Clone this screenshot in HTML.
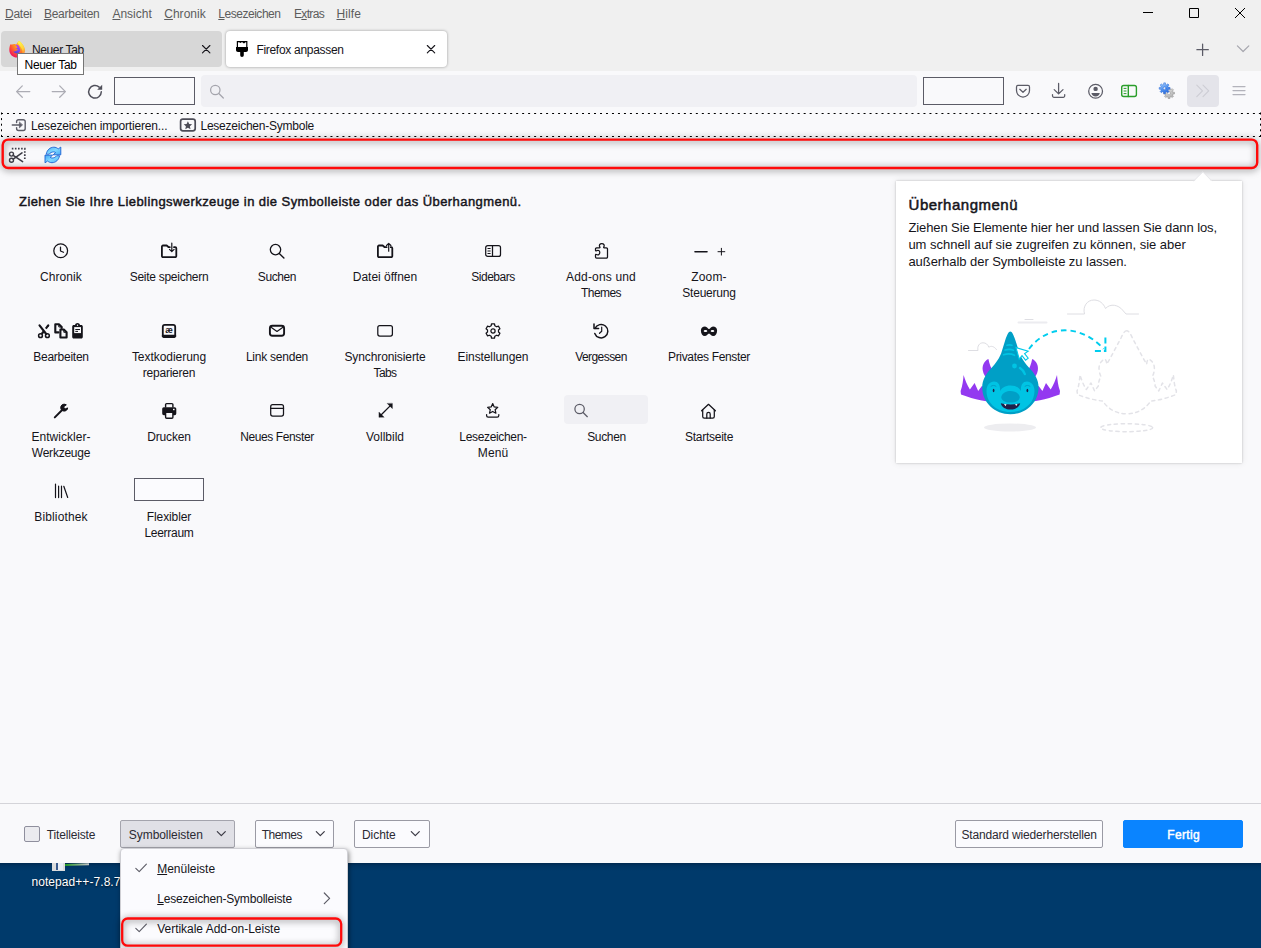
<!DOCTYPE html>
<html lang="de">
<head>
<meta charset="utf-8">
<title>Firefox anpassen</title>
<style>
*{box-sizing:border-box;margin:0;padding:0}
html,body{width:1261px;height:948px;overflow:hidden}
body{position:relative;background:#f9f9fb;font-family:"Liberation Sans","DejaVu Sans",sans-serif;font-size:12px;color:#15141a}
.abs{position:absolute}
.t{position:absolute;white-space:nowrap}
.t u{text-decoration:underline;text-underline-offset:1px;text-decoration-thickness:1px}
svg{position:absolute;overflow:visible}
#titlebar{left:0;top:0;width:1261px;height:71px;background:#f0f0f0}
#tab1{left:1px;top:31px;width:221px;height:36px;background:#d7d7d7;border-radius:4px}
#tab2{left:226px;top:31px;width:221px;height:36px;background:#fff;border-radius:4px;box-shadow:0 0 3px rgba(0,0,0,.38)}
#navbar{left:0;top:71px;width:1261px;height:41px;background:#f9f9fb}
.box{border:1px solid #5b5b66;background:#f9f9fb}
#urlbar{left:201px;top:75px;width:716px;height:32px;background:#f0f0f4;border-radius:4px}
#addonbar{left:2px;top:139px;width:1256px;height:30px;border-radius:6px;background:#f9f9fb}
#panel{left:896px;top:181px;width:346px;height:282px;background:#fff;box-shadow:0 0 2px rgba(0,0,0,.22),0 0 7px rgba(0,0,0,.09)}
#footer{left:0;top:803px;width:1261px;height:60px;background:#f9f9fb;border-top:1px solid #d4d4d9}
#desktop{left:0;top:862px;width:1261px;height:86px;background:linear-gradient(#00264a,#003462 4px,#003a6b 9px)}
.btn{position:absolute;top:820px;height:28px;border:1px solid #9a9aa4;border-radius:2px;background:#fbfbfe}
#popup{left:120px;top:848px;width:228px;height:110px;background:#fbfbfe;border:1px solid #cfcfd4;border-radius:4px;box-shadow:1px 2px 5px rgba(0,0,0,.45)}
#tooltip{left:17px;top:53px;width:67px;height:22px;background:#fff;border:1px solid #767676}
</style>
</head>
<body>
<div id="titlebar" class="abs"></div>
<div id="tab1" class="abs"></div>
<div id="tab2" class="abs"></div>
<div id="navbar" class="abs"></div>
<div class="abs box" style="left:114px;top:77px;width:81px;height:28px"></div>
<div id="urlbar" class="abs"></div>
<div class="abs box" style="left:923px;top:77px;width:81px;height:28px"></div>
<div class="abs" style="left:1187px;top:75px;width:32px;height:32px;background:#e4e4ea;border-radius:4px"></div>
<div id="addonbar" class="abs"></div>
<div class="abs" style="left:564px;top:395px;width:84px;height:29px;background:#f0f0f4;border-radius:4px"></div>
<div class="abs box" style="left:134px;top:478px;width:70px;height:23px;background:#fbfbfe"></div>
<div id="panel" class="abs"></div>
<div id="desktop" class="abs"></div>
<div class="abs" style="left:52px;top:862px;width:13px;height:9px;background:#dcdcdc"></div>
<div class="abs" style="left:56px;top:863px;width:7px;height:7px;background:#e9eef5;border-left:2px solid #3a5a8c"></div>
<div class="abs" style="left:65px;top:864px;width:24px;height:2px;background:linear-gradient(90deg,#1f9a1f,#9ab59a 70%,#c8c8c8);transform:rotate(-1.5deg);transform-origin:left"></div>
<div class="t" style="left:31.4px;top:874px;font-size:12px;line-height:16px;color:#fff;width:89px;letter-spacing:.07px;overflow:hidden;text-shadow:0 1px 2px rgba(0,0,0,.8)">notepad++-7.8.7</div>
<div id="footer" class="abs"></div>
<div class="abs" style="left:24px;top:826px;width:16px;height:16px;border:1px solid #8f8f9d;border-radius:2px;background:#ebebef"></div>
<div class="btn" style="left:120px;width:115px;background:#e0e0e6;border-color:#a4a4ad"></div>
<div class="btn" style="left:255px;width:79px"></div>
<div class="btn" style="left:354px;width:76px"></div>
<div class="btn" style="left:955px;width:148px"></div>
<div class="btn" style="left:1123px;width:120px;background:#0a84ff;border-color:#0a84ff"></div>
<div id="popup" class="abs"></div>
<div class="t" style="top:6.14px;font-size:12px;line-height:16px;color:#5c5c5c;letter-spacing:-0.266px;left:5.0px;"><u>D</u>atei</div>
<div class="t" style="top:6.14px;font-size:12px;line-height:16px;color:#5c5c5c;letter-spacing:-0.246px;left:43.9px;"><u>B</u>earbeiten</div>
<div class="t" style="top:6.14px;font-size:12px;line-height:16px;color:#5c5c5c;letter-spacing:0.004px;left:112.4px;"><u>A</u>nsicht</div>
<div class="t" style="top:6.14px;font-size:12px;line-height:16px;color:#5c5c5c;letter-spacing:0.034px;left:164.2px;"><u>C</u>hronik</div>
<div class="t" style="top:6.14px;font-size:12px;line-height:16px;color:#5c5c5c;letter-spacing:-0.473px;left:218.3px;"><u>L</u>esezeichen</div>
<div class="t" style="top:6.14px;font-size:12px;line-height:16px;color:#5c5c5c;letter-spacing:-0.672px;left:294.0px;">E<u>x</u>tras</div>
<div class="t" style="top:6.14px;font-size:12px;line-height:16px;color:#5c5c5c;letter-spacing:0.097px;left:336.5px;"><u>H</u>ilfe</div>
<div class="t" style="top:41.64px;font-size:12px;line-height:16px;color:#15141a;letter-spacing:-0.362px;left:31.9px;">Neuer Tab</div>
<div class="t" style="top:41.64px;font-size:12px;line-height:16px;color:#15141a;letter-spacing:-0.298px;left:256.4px;">Firefox anpassen</div>
<div class="t" style="top:117.54px;font-size:12px;line-height:16px;color:#15141a;letter-spacing:-0.175px;left:31.1px;">Lesezeichen importieren...</div>
<div class="t" style="top:117.54px;font-size:12px;line-height:16px;color:#15141a;letter-spacing:-0.241px;left:200.5px;">Lesezeichen-Symbole</div>
<div class="t" style="top:193.30px;font-size:13px;line-height:18px;color:#15141a;letter-spacing:0.436px;left:19.0px;-webkit-text-stroke:.45px #15141a;">Ziehen Sie Ihre Lieblingswerkzeuge in die Symbolleiste oder das Überhangmenü.</div>
<div class="t" style="top:268.84px;font-size:12px;line-height:16px;color:#15141a;letter-spacing:0.063px;left:-39.0px;width:200px;text-align:center;">Chronik</div>
<div class="t" style="top:268.84px;font-size:12px;line-height:16px;color:#15141a;letter-spacing:-0.268px;left:69.0px;width:200px;text-align:center;">Seite speichern</div>
<div class="t" style="top:268.84px;font-size:12px;line-height:16px;color:#15141a;letter-spacing:-0.401px;left:177.0px;width:200px;text-align:center;">Suchen</div>
<div class="t" style="top:268.84px;font-size:12px;line-height:16px;color:#15141a;letter-spacing:-0.008px;left:285.0px;width:200px;text-align:center;">Datei öffnen</div>
<div class="t" style="top:268.84px;font-size:12px;line-height:16px;color:#15141a;letter-spacing:-0.497px;left:393.0px;width:200px;text-align:center;">Sidebars</div>
<div class="t" style="top:268.84px;font-size:12px;line-height:16px;color:#15141a;letter-spacing:0.158px;left:501.0px;width:200px;text-align:center;">Add-ons und</div>
<div class="t" style="top:284.84px;font-size:12px;line-height:16px;color:#15141a;letter-spacing:-0.560px;left:501.0px;width:200px;text-align:center;">Themes</div>
<div class="t" style="top:268.84px;font-size:12px;line-height:16px;color:#15141a;letter-spacing:0.166px;left:609.0px;width:200px;text-align:center;">Zoom-</div>
<div class="t" style="top:284.84px;font-size:12px;line-height:16px;color:#15141a;letter-spacing:-0.232px;left:609.0px;width:200px;text-align:center;">Steuerung</div>
<div class="t" style="top:348.84px;font-size:12px;line-height:16px;color:#15141a;letter-spacing:-0.255px;left:-39.0px;width:200px;text-align:center;">Bearbeiten</div>
<div class="t" style="top:348.84px;font-size:12px;line-height:16px;color:#15141a;letter-spacing:-0.040px;left:69.0px;width:200px;text-align:center;">Textkodierung</div>
<div class="t" style="top:364.84px;font-size:12px;line-height:16px;color:#15141a;letter-spacing:-0.240px;left:69.0px;width:200px;text-align:center;">reparieren</div>
<div class="t" style="top:348.84px;font-size:12px;line-height:16px;color:#15141a;letter-spacing:-0.238px;left:177.0px;width:200px;text-align:center;">Link senden</div>
<div class="t" style="top:348.84px;font-size:12px;line-height:16px;color:#15141a;letter-spacing:-0.101px;left:285.0px;width:200px;text-align:center;">Synchronisierte</div>
<div class="t" style="top:364.84px;font-size:12px;line-height:16px;color:#15141a;letter-spacing:-0.590px;left:285.0px;width:200px;text-align:center;">Tabs</div>
<div class="t" style="top:348.84px;font-size:12px;line-height:16px;color:#15141a;letter-spacing:-0.097px;left:393.0px;width:200px;text-align:center;">Einstellungen</div>
<div class="t" style="top:348.84px;font-size:12px;line-height:16px;color:#15141a;letter-spacing:-0.558px;left:501.0px;width:200px;text-align:center;">Vergessen</div>
<div class="t" style="top:348.84px;font-size:12px;line-height:16px;color:#15141a;letter-spacing:-0.342px;left:609.0px;width:200px;text-align:center;">Privates Fenster</div>
<div class="t" style="top:428.84px;font-size:12px;line-height:16px;color:#15141a;letter-spacing:0.028px;left:-39.0px;width:200px;text-align:center;">Entwickler-</div>
<div class="t" style="top:444.84px;font-size:12px;line-height:16px;color:#15141a;letter-spacing:-0.232px;left:-39.0px;width:200px;text-align:center;">Werkzeuge</div>
<div class="t" style="top:428.84px;font-size:12px;line-height:16px;color:#15141a;letter-spacing:-0.170px;left:69.0px;width:200px;text-align:center;">Drucken</div>
<div class="t" style="top:428.84px;font-size:12px;line-height:16px;color:#15141a;letter-spacing:-0.393px;left:177.0px;width:200px;text-align:center;">Neues Fenster</div>
<div class="t" style="top:428.84px;font-size:12px;line-height:16px;color:#15141a;letter-spacing:0.009px;left:285.0px;width:200px;text-align:center;">Vollbild</div>
<div class="t" style="top:428.84px;font-size:12px;line-height:16px;color:#15141a;letter-spacing:-0.341px;left:393.0px;width:200px;text-align:center;">Lesezeichen-</div>
<div class="t" style="top:444.84px;font-size:12px;line-height:16px;color:#15141a;letter-spacing:0.092px;left:393.0px;width:200px;text-align:center;">Menü</div>
<div class="t" style="top:428.84px;font-size:12px;line-height:16px;color:#15141a;letter-spacing:-0.334px;left:506.5px;width:200px;text-align:center;">Suchen</div>
<div class="t" style="top:428.84px;font-size:12px;line-height:16px;color:#15141a;letter-spacing:-0.250px;left:609.0px;width:200px;text-align:center;">Startseite</div>
<div class="t" style="top:508.84px;font-size:12px;line-height:16px;color:#15141a;letter-spacing:0.127px;left:-39.0px;width:200px;text-align:center;">Bibliothek</div>
<div class="t" style="top:508.84px;font-size:12px;line-height:16px;color:#15141a;letter-spacing:-0.107px;left:69.0px;width:200px;text-align:center;">Flexibler</div>
<div class="t" style="top:524.84px;font-size:12px;line-height:16px;color:#15141a;letter-spacing:-0.270px;left:69.0px;width:200px;text-align:center;">Leerraum</div>
<div class="t" style="top:194.50px;font-size:15px;line-height:20px;color:#15141a;letter-spacing:0.499px;left:908.6px;-webkit-text-stroke:.5px #15141a;">Überhangmenü</div>
<div class="t" style="top:218.50px;font-size:13px;line-height:18px;color:#15141a;letter-spacing:-0.095px;left:908.4px;">Ziehen Sie Elemente hier her und lassen Sie dann los,</div>
<div class="t" style="top:235.50px;font-size:13px;line-height:18px;color:#15141a;letter-spacing:-0.017px;left:908.4px;">um schnell auf sie zugreifen zu können, sie aber</div>
<div class="t" style="top:252.50px;font-size:13px;line-height:18px;color:#15141a;letter-spacing:-0.051px;left:908.4px;">außerhalb der Symbolleiste zu lassen.</div>
<div class="t" style="top:827.14px;font-size:12px;line-height:16px;color:#2b2a33;letter-spacing:-0.168px;left:46.8px;">Titelleiste</div>
<div class="t" style="top:827.14px;font-size:12px;line-height:16px;color:#2b2a33;letter-spacing:-0.054px;left:128.8px;">Symbolleisten</div>
<div class="t" style="top:827.14px;font-size:12px;line-height:16px;color:#2b2a33;letter-spacing:-0.510px;left:261.7px;">Themes</div>
<div class="t" style="top:827.14px;font-size:12px;line-height:16px;color:#2b2a33;letter-spacing:-0.053px;left:362.0px;">Dichte</div>
<div class="t" style="top:827.14px;font-size:12px;line-height:16px;color:#2b2a33;letter-spacing:-0.157px;left:961.4px;">Standard wiederherstellen</div>
<div class="t" style="top:827.14px;font-size:12px;line-height:16px;color:#fff;letter-spacing:0.385px;left:1167.2px;-webkit-text-stroke:.45px #fff;">Fertig</div>
<div class="t" style="top:860.84px;font-size:12px;line-height:16px;color:#15141a;letter-spacing:-0.015px;left:157.2px;"><u>M</u>enüleiste</div>
<div class="t" style="top:890.64px;font-size:12px;line-height:16px;color:#15141a;letter-spacing:-0.193px;left:157.2px;"><u>L</u>esezeichen-Symbolleiste</div>
<div class="t" style="top:920.74px;font-size:12px;line-height:16px;color:#15141a;letter-spacing:-0.023px;left:157.2px;">Vertikale Add-on-Leiste</div>
<!-- TOP CHROME ICONS -->
<svg width="1261" height="172" viewBox="0 0 1261 172" style="left:0;top:0" fill="none" stroke-linecap="round" stroke-linejoin="round">
<defs>
<radialGradient id="fxg" cx="0.75" cy="0.1" r="1.050"><stop offset="0" stop-color="#ffd43a"/><stop offset="0.400" stop-color="#ff9a1f"/><stop offset="0.700" stop-color="#ff4a3a"/><stop offset="1" stop-color="#e60068"/></radialGradient>
<linearGradient id="fxy" x1="0.3" y1="0" x2="0.6" y2="1"><stop offset="0" stop-color="#fff84a"/><stop offset="0.600" stop-color="#ffd23a"/><stop offset="1" stop-color="#ff8a2a"/></linearGradient>
<linearGradient id="fxp" x1="0.6" y1="0" x2="0.3" y2="1"><stop offset="0" stop-color="#c23bf5"/><stop offset="0.600" stop-color="#7a4af0"/><stop offset="1" stop-color="#4a3fd0"/></linearGradient>
<linearGradient id="syg" x1="0" y1="0" x2="1" y2="1"><stop offset="0" stop-color="#4fb0f6"/><stop offset="0.500" stop-color="#7fd8ff"/><stop offset="1" stop-color="#48a8f4"/></linearGradient>
<linearGradient id="gbl" x1="0.2" y1="0" x2="0.7" y2="1"><stop offset="0" stop-color="#a8d0fc"/><stop offset="0.5" stop-color="#5596f0"/><stop offset="1" stop-color="#2466dc"/></linearGradient>
<linearGradient id="ggr" x1="0" y1="0" x2="0.5" y2="1"><stop offset="0" stop-color="#e6e6e6"/><stop offset="1" stop-color="#b4b4b4"/></linearGradient>
</defs>
<!-- window controls -->
<g stroke="#000" stroke-width="1" stroke-linecap="butt">
<path d="M1143 12.5h10"/>
<rect x="1189.5" y="8.5" width="9" height="9"/>
<path d="M1235 8l10 10M1245 8l-10 10"/>
</g>
<!-- new tab + / chevron -->
<path d="M1202.6 44v11.4M1196.9 49.7h11.4" stroke="#5b5b66" stroke-width="1.25"/>
<path d="M1237.4 45.8l5.7 5.7 5.7-5.7" stroke="#a6a6ae" stroke-width="1.2"/>
<!-- firefox logo -->
<g transform="translate(9 41)" stroke="none">
<path d="M1.400 3.200c.5.300 1 .400 1.600.300.800-.500 1.800-.700 2.900-.600L7.200 3.500C8 2 9 .8 10.100-.200c1.400 1.400 3.400 3 4.500 5.200 1 2 1.500 4.300.800 6.600-1 3-3.900 4.900-7.300 4.900-4.300 0-7.800-3.400-7.800-7.600 0-2.200.400-4 1.100-5.700z" fill="url(#fxg)"/>
<path d="M10.100-.200c1.400 1.400 3.400 3 4.500 5.200 1 2 1.400 4.200.900 6.200-.600 1.500-1.600 2.500-3 3.200 1.300-2.200 1.300-5-.200-7.500C11.200 5 9.300 3.400 8.600 1.600 9 1 9.500.400 10.100-.200z" fill="url(#fxy)"/>
<path d="M6.300 4c1.600-.500 3.300.100 4 1.500.500 1 .400 1.900.900 2.600.600 2.200-.900 3.900-2.700 4.300-1.800.300-3.700-.600-4.300-2.100.800.300 2.200.200 2.700-.300C8 9.600 8.700 9.100 9 8.300 8 8.500 7 8.200 6.500 7.600c.900-.100 1.700-.600 2-1.100-.600-1.300-1.300-1.900-2.200-2.500z" fill="url(#fxp)"/>
</g>
<!-- tab close x -->
<path d="M202.500 45.500l7.400 7.400M209.900 45.500l-7.400 7.400" stroke="#15141a" stroke-width="1.100"/>
<path d="M427.300 45.500l7.400 7.400M434.700 45.500l-7.400 7.400" stroke="#15141a" stroke-width="1.100"/>
<!-- paintbrush -->
<g fill="#000" stroke="none">
<path d="M236.800 41h10.600v6.200h-10.600z M238 42.800v4.100h8.200v-4.600c-.5-.3-1-.2-1.300.4-.4.800-1.500.8-2 0-.5-.7-1.100-.6-1.700-.1-.7.500-1.300.4-1.700-.2-.4-.5-1-.4-1.500.4z" fill-rule="evenodd"/>
<path d="M236 47h12v3c0 1.100-.9 2-2 2h-8c-1.100 0-2-.9-2-2z"/>
<path d="M240.200 51.500h3.600v3.800a1.800 1.800 0 0 1-3.600 0z"/>
</g>
<!-- back / forward (disabled) -->
<g stroke="#acacb4" stroke-width="1.250">
<path d="M29.800 91.600H16.600M22.300 85.900l-5.700 5.700 5.700 5.700"/>
<path d="M52.200 91.600h13.200M59.700 85.900l5.700 5.700-5.700 5.700"/>
</g>
<!-- reload -->
<g>
<path d="M101.300 91.800a6.300 6.300 0 1 1-2.100-4.700" stroke="#4f4f5a" stroke-width="1.500"/>
<path d="M102.200 84.800v5h-5z" fill="#4f4f5a" stroke="none"/>
</g>
<!-- urlbar search glass -->
<g stroke="#a4a4ac" stroke-width="1.250"><circle cx="215.300" cy="90" r="4.700"/><path d="M218.800 93.500l4.500 4.500"/></g>
<!-- pocket -->
<g stroke="#5b5b66" stroke-width="1.250">
<path d="M1018 85.400h10a1.500 1.500 0 0 1 1.500 1.500v3.600a6.500 6.500 0 0 1-13 0v-3.600a1.500 1.500 0 0 1 1.500-1.500z"/>
<path d="M1019.800 89.300l3.200 3 3.200-3"/>
</g>
<!-- download -->
<g stroke="#5b5b66" stroke-width="1.250">
<path d="M1058.600 83.400v10.300M1054.200 89.600l4.400 4.300 4.400-4.300"/>
<path d="M1052.500 94.600v1.200a1.500 1.500 0 0 0 1.500 1.500h9.200a1.500 1.500 0 0 0 1.500-1.500v-1.200"/>
</g>
<!-- account -->
<g>
<circle cx="1095.600" cy="91.200" r="6.900" stroke="#5b5b66" stroke-width="1.250"/>
<circle cx="1095.600" cy="88.900" r="2.200" fill="#5b5b66"/>
<path d="M1091.400 93h8.400a4.300 4.300 0 0 1-8.400 0z" fill="#5b5b66"/>
</g>
<!-- sidebar (green) -->
<g stroke="#2b9e2b" stroke-width="1.400">
<rect x="1121.700" y="85.500" width="14.700" height="11" rx="2"/>
<path d="M1128.300 85.500v11" />
<path d="M1124 88.400h2.100M1124 91h2.100M1124 93.600h2.100" stroke-width="1"/>
</g>
<!-- gears addon icon -->
<g stroke="none">
<g transform="translate(1163.500 87.600)"><path d="M9.380 4.530 L10.930 4.640 L10.930 6.360 L9.380 6.470 L8.930 7.560 L9.950 8.730 L8.730 9.950 L7.560 8.930 L6.470 9.380 L6.360 10.930 L4.640 10.930 L4.530 9.380 L3.440 8.930 L2.270 9.950 L1.050 8.730 L2.070 7.560 L1.620 6.470 L0.070 6.360 L0.070 4.640 L1.620 4.530 L2.070 3.440 L1.050 2.270 L2.270 1.050 L3.440 2.070 L4.530 1.620 L4.640 0.070 L6.360 0.070 L6.470 1.620 L7.560 2.070 L8.730 1.050 L9.950 2.270 L8.930 3.440Z" fill="url(#ggr)" stroke="#8e8e8e" stroke-width=".600"/><circle cx="5.500" cy="5.500" r="1.500" fill="#f9f9fb" stroke="#a0a0a0" stroke-width=".500"/></g>
<g transform="translate(1159.100 82.800)"><path d="M9.380 4.530 L10.930 4.640 L10.930 6.360 L9.380 6.470 L8.930 7.560 L9.950 8.730 L8.730 9.950 L7.560 8.930 L6.470 9.380 L6.360 10.930 L4.640 10.930 L4.530 9.380 L3.440 8.930 L2.270 9.950 L1.050 8.730 L2.070 7.560 L1.620 6.470 L0.070 6.360 L0.070 4.640 L1.620 4.530 L2.070 3.440 L1.050 2.270 L2.270 1.050 L3.440 2.070 L4.530 1.620 L4.640 0.070 L6.360 0.070 L6.470 1.620 L7.560 2.070 L8.730 1.050 L9.950 2.270 L8.930 3.440Z" fill="url(#gbl)" stroke="#2c6ad8" stroke-width=".500"/><circle cx="5.500" cy="5.500" r="1.400" fill="#e4e8f0" stroke="#2c6ad8" stroke-width=".500"/></g>
</g>
<!-- overflow chevrons -->
<path d="M1196.800 85.200l5.700 5.700-5.700 5.700M1203 85.200l5.700 5.700-5.700 5.700" stroke="#cdcdd4" stroke-width="1.100"/>
<!-- hamburger -->
<path d="M1233 86.600h12M1233 90.600h12M1233 94.600h12" stroke="#b3b3bb" stroke-width="1.250"/>
<!-- bookmarks bar dotted frame -->
<g stroke="#000" stroke-width="1" stroke-linecap="butt"><path d="M1 113.500H1260.500M1 136.500H1260.500" stroke-dasharray="2 3.990"/><path d="M1.500 112.500V137M1260.500 112.500V137" stroke-dasharray="2 3.600"/></g>
<!-- red highlight -->
<rect x="2.700" y="139.600" width="1254.500" height="28.400" rx="5.500" stroke="#ff0a0a" stroke-width="2.400" style="filter:drop-shadow(.5px 1px 3.500px rgba(0,0,0,.6))"/>
<!-- import icon -->
<g stroke="#5b5b66">
<path d="M16.600 122.600v-1a1.900 1.900 0 0 1 1.900-1.900h4.800a1.900 1.900 0 0 1 1.900 1.900v7a1.900 1.900 0 0 1-1.900 1.900h-4.800a1.900 1.900 0 0 1-1.900-1.900v-1" stroke-width="1.400"/>
<path d="M12.300 125.100h7" stroke-width="1.500"/>
<path d="M19.400 122.300v5.600l3-2.800z" fill="#5b5b66" stroke-width=".600"/>
</g>
<!-- bookmarks star box -->
<g>
<rect x="180.600" y="119.100" width="14.600" height="11.800" rx="2.300" stroke="#4c4c57" stroke-width="1.700"/>
<path d="M187.900 121.300l1.300 2.700 2.900.3-2.200 2 .6 2.900-2.600-1.500-2.600 1.500.6-2.900-2.200-2 2.900-.3z" fill="#4c4c57" stroke="none"/>
</g>
<!-- scissors screenshot icon -->
<g stroke="#3d3d47">
<path d="M11.800 148.700h13v10.600" stroke-width="1.700" stroke-dasharray="1.600 1.500" stroke-linecap="butt" stroke-linejoin="miter"/>
<circle cx="11.500" cy="154.100" r="2" stroke-width="1.400"/>
<circle cx="11.500" cy="160.300" r="2" stroke-width="1.400"/>
<path d="M13.200 155.300l9.400 6.300M13.200 159.100l8.800-6.200" stroke-width="1.600"/>
</g>
<!-- blue sync icon -->
<g stroke="#1c62d2" stroke-width=".900" fill="url(#syg)" stroke-linejoin="miter">
<path d="M46.300 153.800C47 150 50 147.200 53.800 147.200C55.500 147.200 57 147.800 58.200 148.900L60.800 147.100L60.800 154.800L53.200 154.800L55.600 152.600C55 152.100 54.300 151.900 53.600 151.900C51.800 151.900 50.200 152.700 49.400 153.800Z"/>
<path d="M46.300 153.800C47 150 50 147.200 53.800 147.200C55.500 147.200 57 147.800 58.200 148.900L60.800 147.100L60.800 154.800L53.200 154.800L55.600 152.600C55 152.100 54.300 151.900 53.600 151.900C51.800 151.900 50.200 152.700 49.400 153.800Z" transform="rotate(180 52.900 154.950)"/>
</g>
</svg>


<!-- GRID ICONS -->
<svg width="800" height="340" viewBox="0 230 800 340" style="left:0;top:230px" fill="none" stroke="#15141a" stroke-width="1.250" stroke-linecap="round" stroke-linejoin="round">
<!-- row 1 -->
<g transform="translate(53 243)">
<circle cx="7.700" cy="7.800" r="6.900"/><path d="M7.500 4v4l3 1.300"/>
</g>
<g transform="translate(161 243)">
<path d="M8.800 4.200H7.700L5.700 2.500H2a1.100 1.100 0 0 0-1.100 1.100V13a1.100 1.100 0 0 0 1.100 1.100h12.200a1.100 1.100 0 0 0 1.100-1.100V5.300a1.100 1.100 0 0 0-1.100-1.100H13" stroke-width="1.800"/>
<path d="M10.800 0v8.400M8.500 6.300l2.300 2.300 2.300-2.300" stroke-width="1.200"/>
</g>
<g transform="translate(269 243)">
<circle cx="6.500" cy="6.600" r="5.200" stroke-width="1.300"/><path d="M10.300 10.500l4.600 4.600" stroke-width="1.400"/>
</g>
<g transform="translate(377 243)">
<path d="M9.600 4.200H7.700L5.700 2.500H2a1.100 1.100 0 0 0-1.100 1.100V13a1.100 1.100 0 0 0 1.100 1.100h12.200a1.100 1.100 0 0 0 1.100-1.100V5.300a1.100 1.100 0 0 0-1.100-1.100h-.4" stroke-width="1.800"/>
<path d="M11.700 8.200V.4M9.500 2.500L11.700.3l2.200 2.200" stroke-width="1.200"/>
</g>
<g transform="translate(485 243)">
<rect x=".700" y="2.600" width="14.800" height="10.800" rx="2"/><path d="M7.500 2.600v10.800"/><path d="M2.900 5.500h2.300M2.900 8h2.300M2.900 10.500h2.300" stroke-width="1"/>
</g>
<g transform="translate(593 243)">
<path d="M3.600 15.200h9.800a1.100 1.100 0 0 0 1.100-1.100V6a1.100 1.100 0 0 0-1.100-1.100h-2.200c-.6 0-.7-.500-.4-1 .9-1.500.1-3.400-2-3.400s-2.900 1.900-2 3.400c.3.500.2 1-.4 1H3.600A1.100 1.100 0 0 0 2.500 6v1.300c0 .6.500.7 1 .4 1.500-.9 3.300-.1 3.300 1.900s-1.800 2.800-3.300 1.900c-.5-.3-1-.2-1 .4v2.200a1.100 1.100 0 0 0 1.100 1.100z"/>
</g>
<path d="M695 251.700h12" stroke-width="1.600"/>
<path d="M718 251.700h6.800M721.400 248.300v6.800" stroke-width="1"/>
<!-- row 2 -->
<!-- cut -->
<g>
<path d="M39.500 325.300l6.700 8.700" stroke-width="2.100"/>
<path d="M48.300 325.300l-2.500 3.300M44 331l-2.300 3" stroke-width="2.100" stroke-linecap="butt"/>
<path d="M48.300 325.300l-.5.700" stroke-width="2.100"/>
<circle cx="40.500" cy="335.700" r="1.900" stroke-width="1.500"/><circle cx="47.400" cy="335.700" r="1.900" stroke-width="1.500"/>
</g>
<!-- copy -->
<g stroke-width="2.100" stroke-linejoin="round">
<path d="M58.500 332.400h-3.200v-8.200h3.600l2.800 2.800v1"/>
<path d="M60.400 329.500h3.400l2.800 2.800v5.200h-6.200z"/>
<path d="M58.800 324.600v2.400h2.400M63.800 329.900v2.400h2.400" stroke-width="1"/>
</g>
<!-- paste -->
<g stroke="none" fill="#15141a">
<path d="M73.700 324.900h1.300c.4-1.100 1.300-1.800 2.500-1.800s2.100.7 2.500 1.800h1.300c.8 0 1.500.7 1.500 1.500v10.700c0 .8-.7 1.500-1.500 1.500h-7.600c-.8 0-1.500-.7-1.500-1.500v-10.700c0-.8.700-1.500 1.500-1.500z"/>
<path d="M74.200 327.100h6.800v6h-6.800z" fill="#f9f9fb"/>
<rect x="75.300" y="329" width="4.700" height="1"/><rect x="75.300" y="330.900" width="2.700" height="1"/>
<circle cx="77.500" cy="325.300" r=".700" fill="#f9f9fb"/>
</g>
<!-- text encoding -->
<g>
<rect x="162.800" y="324.800" width="12.400" height="12.400" rx="2" stroke-width="1.800"/>
<path d="M163 336h12" stroke-width="2.600"/>
<text x="169" y="333.200" font-family="Liberation Sans, sans-serif" font-size="8.500" font-weight="bold" fill="#15141a" stroke="none" text-anchor="middle">æ</text>
</g>
<!-- mail -->
<g>
<rect x="269.900" y="325.800" width="14.200" height="10" rx="2.500" stroke-width="1.900"/>
<path d="M271.400 327.600l5.600 3.800 5.600-3.800" stroke-width="1.200"/>
</g>
<!-- synced tabs -->
<rect x="377.800" y="325.500" width="14.600" height="10.600" rx="2"/>
<!-- settings gear -->
<g transform="translate(485 323)">
<path d="M9.800 13.300 L9.520 15.140 L6.480 15.140 L6.200 13.300 L4.310 12.210 L2.580 12.880 L1.060 10.260 L2.510 9.090 L2.510 6.910 L1.060 5.740 L2.580 3.120 L4.310 3.790 L6.200 2.700 L6.480 .860 L9.520 .860 L9.800 2.700 L11.690 3.790 L13.420 3.120 L14.940 5.740 L13.490 6.910 L13.490 9.090 L14.940 10.260 L13.420 12.880 L11.690 12.210Z" stroke-linejoin="round"/>
<circle cx="8" cy="8" r="2.100"/>
</g>
<!-- forget -->
<g stroke-width="1.500">
<path d="M595 328.400a6.700 6.700 0 1 1-.2 5"/>
<path d="M594 323.900v4.700h4.600"/>
<path d="M601.700 327.200v4l-2.200 2.100" stroke-width="1.200"/>
</g>
<!-- private mask -->
<path d="M700.900 330.500C700.900 327.500 702.800 326.400 705 326.400C707 326.400 708 329.100 709 329.100C710 329.100 711 326.400 713 326.400C715.200 326.400 717.100 327.500 717.100 330.500C717.100 334 715.500 336 713.200 336C711.200 336 710 333.400 709 333.400C708 333.400 706.800 336 704.800 336C702.500 336 700.900 334 700.900 330.500Z M703.700 331c0 .6.800 1.050 1.800 1.050s1.800-.45 1.800-1.050-.8-1.050-1.800-1.050-1.800.45-1.800 1.050z M710.700 331c0 .6.800 1.050 1.800 1.050s1.800-.45 1.800-1.050-.8-1.050-1.800-1.050-1.800.45-1.800 1.050z" fill="#15141a" fill-rule="evenodd" stroke="none"/>
<!-- row 3 -->
<!-- wrench -->
<g>
<path d="M54.800 417.400l7.600-7.600" stroke-width="2"/>
<path d="M66 404.600a3.500 3.500 0 1 0 1.700 3.300l-2.400.9-1.700-1.500z" fill="#15141a" stroke-width="1"/>
</g>
<!-- printer -->
<g>
<path d="M163.800 407.200h10.900a1.600 1.600 0 0 1 1.600 1.600v4.800a1.600 1.600 0 0 1-1.600 1.600h-10.900a1.600 1.600 0 0 1-1.600-1.600v-4.800a1.600 1.600 0 0 1 1.600-1.600z" fill="#15141a" stroke="none"/>
<path d="M165.600 407v-2.400a1 1 0 0 1 1-1h5.300a1 1 0 0 1 1 1v2.400" stroke-width="1.400"/>
<path d="M165.600 412.200h7.300v5a1 1 0 0 1-1 1h-5.300a1 1 0 0 1-1-1z" fill="#f9f9fb" stroke-width="1.400"/>
<rect x="173" y="408.800" width="1.600" height="1.400" fill="#f9f9fb" stroke="none"/>
</g>
<!-- new window -->
<g><rect x="270.700" y="404.700" width="12.800" height="11.400" rx="2"/><path d="M270.700 408.400h12.800"/></g>
<!-- fullscreen -->
<g>
<path d="M381 415l9.400-9.400" stroke-width="1.300"/>
<path d="M392.300 403.700v4.800l-4.800-4.800z M379 417v-4.800l4.800 4.800z" fill="#15141a" stroke-width=".500"/>
</g>
<!-- bookmarks menu -->
<g>
<path d="M492.700 403.600l1.500 3.300 3.600.4-2.700 2.400.8 3.500-3.200-1.800-3.200 1.800.8-3.500-2.700-2.400 3.600-.4z" stroke-width="1.200"/>
<path d="M486.600 414.600v1a1.600 1.600 0 0 0 1.600 1.600h9a1.600 1.600 0 0 0 1.600-1.600v-1"/>
</g>
<!-- search widget glass -->
<g stroke="#5b5b66"><circle cx="579.600" cy="409" r="4.700"/><path d="M583.100 412.500l4.200 4.200"/></g>
<!-- home -->
<g>
<path d="M701.600 410.800l6.900-6.500 6.900 6.500"/>
<path d="M702.700 410v6.400a1.600 1.600 0 0 0 1.600 1.600h8.400a1.600 1.600 0 0 0 1.600-1.600V410"/>
<path d="M706.800 418v-3.900a1.700 1.700 0 0 1 3.400 0v3.900"/>
</g>
<!-- row 4 library -->
<g stroke-width="1.200"><path d="M55.500 484v13.600M58.600 486.200v11.400M61.500 486.200v11.400M63.800 486.300l3.900 11.200"/></g>
</svg>


<!-- PANEL ILLUSTRATION -->
<svg width="347" height="180" viewBox="896 280 347 180" style="left:896px;top:280px" fill="none" stroke-linecap="round" stroke-linejoin="round">
<!-- clouds -->
<g stroke="#dedee3" stroke-width="1">
<path d="M968.500 350.500h9.500c-1-4.500 1.500-7.700 5-7.700 2.800 0 4.800 1.600 5.800 4.400 2.300-1.600 5.300-1 7.700 2.400"/>
<path d="M1067.500 314h17c-2-7.500 2.500-14 9.500-14 5.500 0 9.500 3.500 11.500 8.500 5-5.500 13-3.500 17 1.500l3.500 4h12.500"/>
<path d="M1025 319.500h8"/>
</g>
<path d="M1018.500 322.500h28" stroke="#ececf0" stroke-width="2"/>
<!-- ground shadow -->
<ellipse cx="1010" cy="427.500" rx="26" ry="4" fill="#ededf0"/>
<!-- wings -->
<g fill="#9339f0">
<path d="M995 402C988 402 975 400 961 394.600L960.600 391C962.600 386 963.100 380 963.600 375C965.100 380 967.100 385 969.900 389.500L974.600 383L978.200 391L981.900 386L995 390Z"/>
<path d="M1025.6 402C1032.6 402 1045.6 400 1059.6 394.600L1060.0 391C1058.0 386 1057.5 380 1057.0 375C1055.5 380 1053.5 385 1050.7 389.500L1046.0 383L1042.4 391L1038.7 386L1025.6 390Z"/>
<path d="M988.400 359C984.100 361 981.900 365.500 982.800 370.500C983.400 374.500 985.500 377.500 989 378.500L994 372C991 369 989.500 364 988.400 359Z"/>
<path d="M1032.2 359C1036.5 361 1038.7 365.500 1037.8 370.500C1037.2 374.500 1035.1 377.500 1031.6 378.500L1026.6 372C1029.6 369 1031.1 364 1032.2 359Z"/>
</g>
<!-- body -->
<path d="M1010.300 331.600C1012 331.600 1013.500 335 1015.300 340L1019.600 353.300C1022.500 360.500 1026.500 365 1030.700 369.500C1034.500 373.500 1038.600 380 1038.600 387.500C1038.600 402.500 1026 414.200 1010.400 414.200C994.800 414.200 982.200 402.500 982.200 387.500C982.200 380 986.300 373.500 990.100 369.500C994.300 365 998.300 360.500 1001.200 353.300L1005.300 340C1007.100 335 1008.600 331.600 1010.300 331.600Z" fill="#009fc6"/>
<!-- face -->
<path d="M986.500 391c0-6 3.500-9.500 7.500-9.500 4.500 0 6.500 4 6 9.500 1.500-3 5-5.500 10.500-5.500s9 2.500 10.500 5.500c-.5-5.500 1.500-9.500 6-9.500 4 0 7.500 3.500 7.500 9.500 0 11-9 21-24 21s-24-10-24-21z" fill="#00c4e4"/>
<path d="M1001.500 396c1.500-3.500 5-5 9-5s7.500 1.500 9 5c1 3-2 6.500-9 6.500s-10-3.500-9-6.500z" fill="#009fc6"/>
<path d="M1000.800 403.200c3 .8 6 1.200 9.700 1.200s6.700-.4 9.700-1.200c-1 4-4.700 6.300-9.700 6.300s-8.700-2.300-9.700-6.300z" fill="#20204a"/>
<path d="M1004 403.900l2.500.3-1 2z M1015 404.200l2.500-.3-1.200 2.200z" fill="#fff"/>
<ellipse cx="993.600" cy="390.500" rx=".900" ry="1.700" fill="#20204a"/>
<ellipse cx="1027.400" cy="390.500" rx=".900" ry="1.700" fill="#20204a"/>
<g stroke="#009fc6" stroke-width="1"><path d="M991 386.300c1.500-1.200 3.500-1.200 5 0M1025 386.300c1.500-1.200 3.500-1.200 5 0"/></g>
<g stroke="#00c4e4" stroke-width="1.600">
<path d="M1007 345.300c1.500-.5 3.500-.5 5 0M1005 350c2.500-.8 6-.8 8.500.2M1003.500 354.800c4-1.300 8-1 11 .5"/>
<path d="M1020 368c2.500 1.500 4 3.500 4.800 6" stroke-width="2.400"/>
</g>
<circle cx="1014.500" cy="366" r="2.400" fill="#00c4e4"/>
<!-- cursor -->
<path d="M1016 347.600l12.200 3.600-3.600 2.400 3.600 4.600-2.600 2-3.600-4.600-2.800 3.400z" fill="#fff" stroke="#00c8e8" stroke-width="1.100" stroke-linejoin="miter"/>
<!-- dashed arc -->
<path d="M1029 349C1037 338 1050 330.300 1065 330.300C1080 330.300 1094 338 1103.500 349" stroke="#00cdee" stroke-width="1.900" stroke-dasharray="5.500 4" stroke-linecap="butt"/>
<path d="M1105.400 337.500v13.500h-13" stroke="#00cdee" stroke-width="2" stroke-dasharray="6 3" stroke-linecap="butt" stroke-linejoin="miter"/>
<!-- ghost -->
<g stroke="#e3e3e8" stroke-width="1.500" stroke-dasharray="3.200 3.600" stroke-linecap="round">
<path d="M1126.7 330.8C1124.3 330.8 1122.6 334.5 1121.0 338.0L1109.8 359.0L1106.6 364.2C1106.8 362.0 1106.0 360.0 1104.8 359.0C1100.5 361.0 1098.3 365.5 1099.2 370.5C1099.5 373.0 1100.2 375.0 1101.0 376.5C1099.3 379.5 1098.4 382.5 1098.3 386.0L1094.6 391.0L1091.0 383.0L1086.3 389.5C1083.5 385.0 1081.5 380.0 1080.0 375.0C1079.5 380.0 1079.0 386.0 1077.0 391.0L1077.5 394.6C1086.0 398.0 1095.0 400.3 1102.5 401.0C1107.0 407.0 1114.0 413.8 1126.7 413.8C1139.4 413.8 1146.4 407.0 1150.9 401.0C1158.4 400.3 1167.4 398.0 1175.9 394.6L1176.4 391.0C1174.4 386.0 1173.9 380.0 1173.4 375.0C1171.9 380.0 1169.9 385.0 1167.1 389.5L1162.4 383.0L1158.8 391.0L1155.1 386.0C1155.0 382.5 1154.1 379.5 1152.4 376.5C1153.2 375.0 1153.9 373.0 1154.2 370.5C1155.1 365.5 1152.9 361.0 1148.6 359.0C1147.4 360.0 1146.6 362.0 1146.8 364.2L1143.6 359.0L1132.4 338.0C1130.8 334.5 1129.1 330.8 1126.7 330.8Z"/>
<ellipse cx="1126.700" cy="427.700" rx="26" ry="4"/>
</g>
</svg>
<!-- panel arrow -->
<svg width="30" height="12" viewBox="1188 170 30 12" style="left:1188px;top:170px"><path d="M1193.500 182l9.300-9.500 9.300 9.500z" fill="#fff"/><path d="M1193.500 181l9.300-9.200 9.300 9.200" fill="none" stroke="#e9e9ec" stroke-width="1"/></svg>


<!-- FOOTER ICONS -->
<svg width="400" height="138" viewBox="0 810 400 138" style="left:0;top:810px" fill="none" stroke-linecap="round" stroke-linejoin="round">
<g stroke="#3a3944" stroke-width="1.200">
<path d="M217.300 831.600l4 4 4-4"/>
<path d="M316.300 831.600l4 4 4-4"/>
<path d="M411.300 831.600l4 4 4-4"/>
</g>
<g stroke="#5c5c66" stroke-width="1.100">
<path d="M135.800 868.400l3.400 3.300 7.200-7.600"/>
<path d="M135.800 928.400l3.400 3.300 7.200-7.600"/>
<path d="M324.300 893l5.300 5.300-5.300 5.300" stroke-width="1.200"/>
</g>
<rect x="122.200" y="918.500" width="219" height="27.200" rx="5.500" stroke="#ff0a0a" stroke-width="2.300" style="filter:drop-shadow(.5px 1px 3.500px rgba(0,0,0,.6))"/>
</svg>

<div id="tooltip" class="abs"></div>
<div class="t" style="left:24.6px;top:56.9px;font-size:12px;line-height:16px;color:#000;letter-spacing:-0.35px">Neuer Tab</div>
</body>
</html>
